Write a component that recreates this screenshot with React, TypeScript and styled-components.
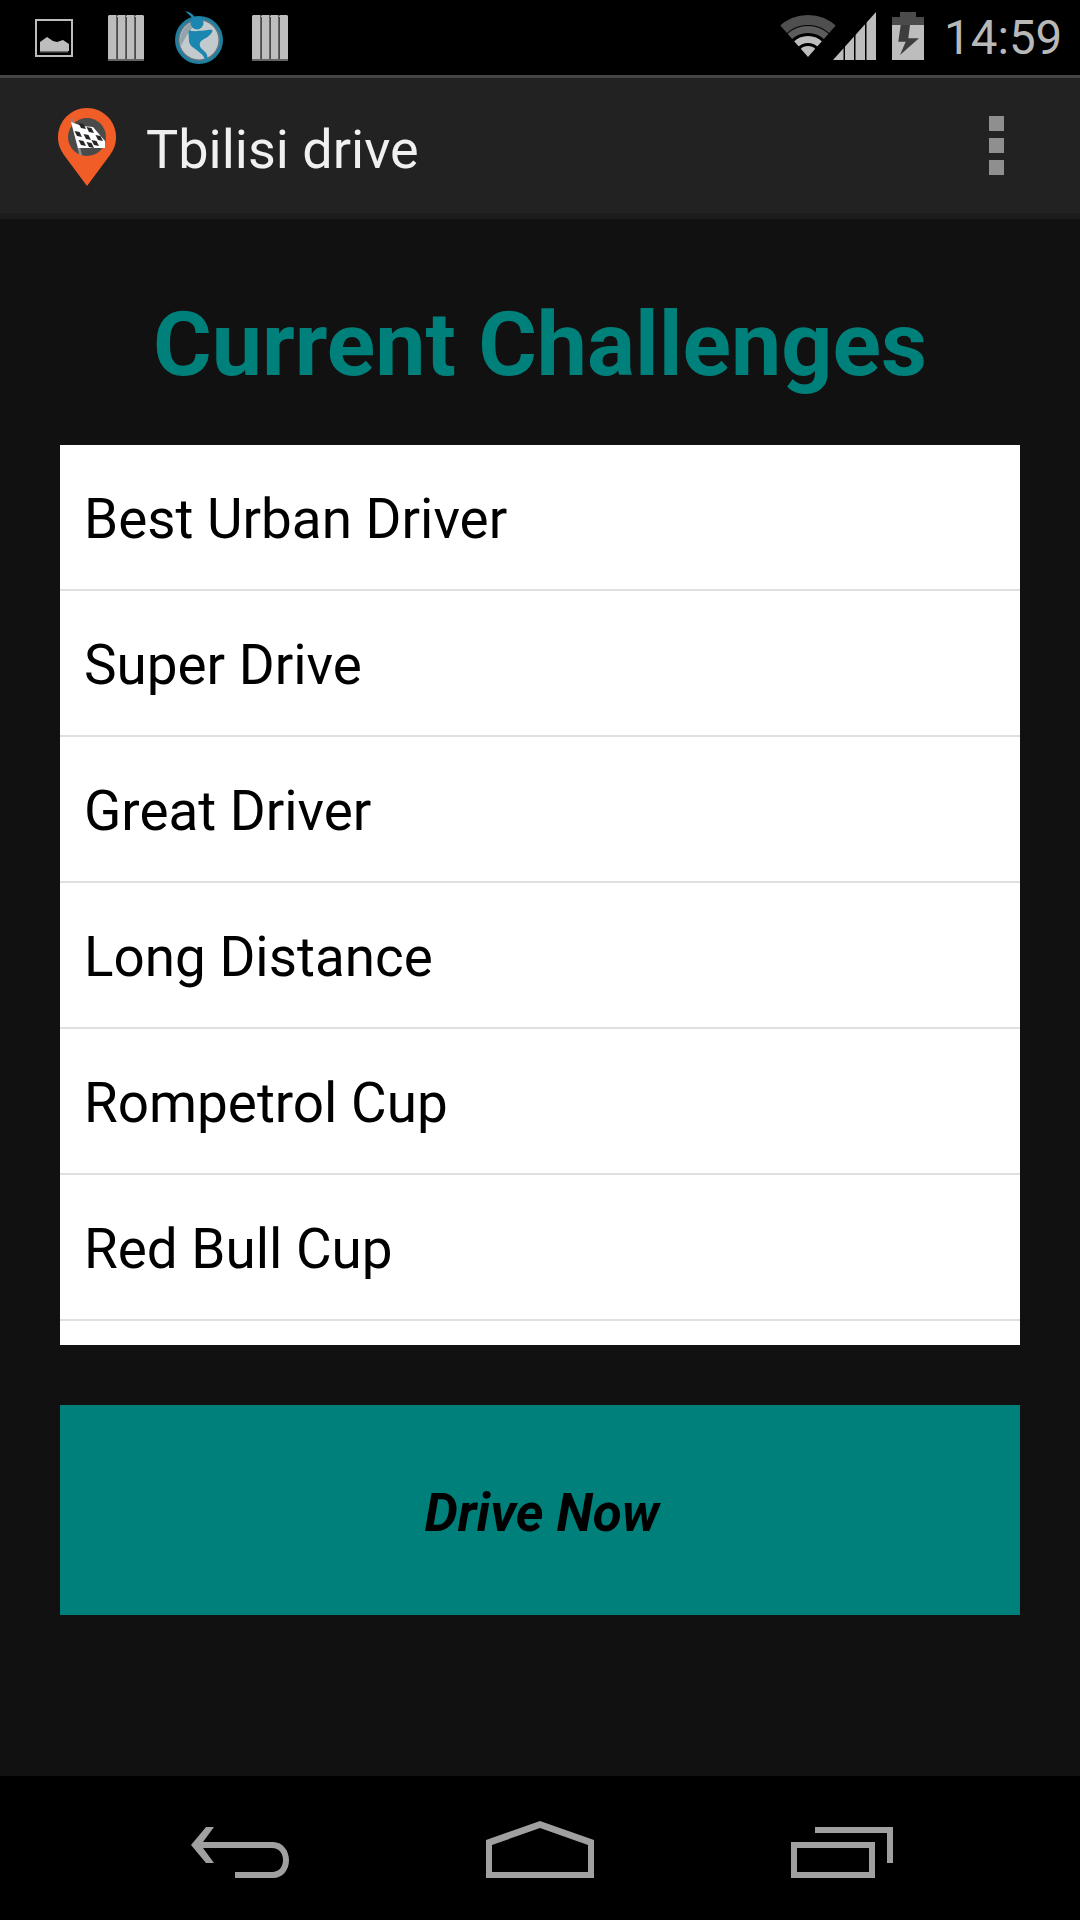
import React, { FunctionComponent } from 'react';
import styled, { createGlobalStyle } from 'styled-components';

const GlobalStyle = createGlobalStyle`
  html, body {
    margin: 0;
    padding: 0;
    background: #111111;
  }
  * {
    box-sizing: border-box;
  }
`;

/**
 *
 *  STYLE
 */
const Screen = styled.div`
  display: flex;
  flex-direction: column;
  width: 1080px;
  height: 1920px;
  overflow: hidden;
  background: #111111;
  font-family: Roboto, 'Liberation Sans', sans-serif;
`;

const StatusBar = styled.div`
  display: flex;
  align-items: flex-start;
  height: 75px;
  background: #000000;
`;

const StatusIcon = styled.span<{ $left: number; $top: number }>`
  display: block;
  flex: none;
  height: 0;
  margin-left: ${(p) => p.$left}px;
  padding-top: ${(p) => p.$top}px;

  svg {
    display: block;
  }
`;

const Clock = styled.span`
  margin-left: 20px;
  font-size: 47.5px;
  font-weight: 400;
  line-height: 77px;
  color: #b8b8b8;
`;

const ActionBar = styled.header`
  display: flex;
  align-items: center;
  height: 138px;
  padding: 0 76px 0 58px;
  border-top: 3px solid #444444;
  background: #222222;

  svg {
    margin-top: 3px;
  }
`;

const AppTitle = styled.h1`
  flex: 1;
  margin: 8px 0 0 30px;
  font-size: 54px;
  font-weight: 400;
  color: #f0f0f0;
`;

const OverflowMenu = styled.div`
  display: flex;
  flex-direction: column;
  gap: 7px;
`;

const MenuDot = styled.span`
  width: 15px;
  height: 15px;
  background: #8f8f8f;
`;

const Content = styled.main`
  flex: 1;
  display: flex;
  flex-direction: column;
  padding: 0 60px;
  border-top: 6px solid #1c1c1c;
`;

const Heading = styled.h2`
  height: 226px;
  margin: 0;
  padding-top: 66px;
  font-size: 89.7px;
  line-height: 120px;
  font-weight: 700;
  text-align: center;
  white-space: nowrap;
  color: #00807a;
`;

const ChallengeList = styled.ul`
  height: 900px;
  margin: 0;
  padding: 0;
  overflow: hidden;
  list-style: none;
  background: #ffffff;
`;

const ChallengeRow = styled.li`
  display: flex;
  align-items: center;
  height: 146px;
  padding: 4px 0 0 24px;
  border-bottom: 2px solid #e0e0e0;
  font-size: 54.8px;
  color: #000000;
`;

const DriveButton = styled.button`
  height: 210px;
  margin-top: 60px;
  padding: 4px 0 0 4px;
  border: none;
  background: #00807a;
  font-family: Roboto, 'Liberation Sans', sans-serif;
  font-size: 54px;
  font-weight: 700;
  font-style: italic;
  color: #000000;
`;

const DriveLabel = styled.span`
  display: inline-block;
  transform: scaleX(0.98);
`;

const NavBar = styled.nav`
  display: flex;
  align-items: flex-end;
  gap: 197px;
  height: 144px;
  padding: 0 0 42px 191px;
  background: #000000;

  svg {
    display: block;
    flex: none;
  }
`;

/**
 *
 *  ICONS
 */
const PictureIcon = () => (
  <svg width="38" height="38" viewBox="0 0 38 38">
    <rect x="1" y="1" width="36" height="36" fill="none" stroke="#bdbdbd" strokeWidth="2" />
    <path d="M5 32V23l7-5 6 4 4 1 6-2 6 4v7z" fill="#bdbdbd" />
    <path d="M5 32h28v1.500H5z" fill="#6e6e6e" />
  </svg>
);

const BarsIcon = () => (
  <svg width="36" height="46" viewBox="0 0 36 46">
    <path d="M1 0h7l1 1v43H0V1zM10 0h7l1 1v43H9V1zM19 0h7l1 1v43h-9V1zM28 0h7l1 1v43h-9V1z" fill="#bdbdbd" />
    <path d="M0 44h36v2H0zM8 1h1v45H8zM17 1h1v45h-1zM26 1h1v45h-1z" fill="#646464" />
    <path d="M9 2h.700v42H9zM18 2h.700v42H18zM27 2h.700v42H27z" fill="#1a1a1a" />
  </svg>
);

const SwirlIcon = () => (
  <svg width="50" height="54" viewBox="0 0 50 54">
    <circle cx="25" cy="29" r="24" fill="#1f7f9f" />
    <circle cx="25" cy="29" r="21" fill="#5f7480" />
    <circle cx="25" cy="29" r="19.500" fill="#c2cacd" />
    <path d="M25 10a19 19 0 0 0-18 25c4-8 8-16 18-25z" fill="#93a5ab" />
    <path d="M11 0c5 1 8 3 10 7l-2 1c-2-3-5-5-8-8z" fill="#2088b0" />
    <circle cx="23" cy="12" r="6.500" fill="#1b86b0" />
    <path d="M15 19c5 3 21-1 23 0 2 1-3 7-8 9-6 3-5 8-1 11 4 3 6 7 3 12l-2 1c2-5-1-8-5-11-6-5-10-6-10-12 0-3-1-7 0-10z" fill="#1b86b0" />
  </svg>
);

const WifiIcon = () => (
  <svg width="59" height="44" viewBox="0 0 59 44">
    <clipPath id="wifi-wedge">
      <path d="M29 43L-15-7H73z" />
    </clipPath>
    <g clipPath="url(#wifi-wedge)" fill="none">
      <circle cx="29" cy="43" r="37" stroke="#4f4f4f" strokeWidth="10" />
      <circle cx="29" cy="43" r="27.500" stroke="#5c5c5c" strokeWidth="7" />
      <circle cx="29" cy="43" r="17.500" stroke="#bdbdbd" strokeWidth="7" />
      <circle cx="29" cy="43" r="5.500" stroke="#bdbdbd" strokeWidth="11" />
    </g>
  </svg>
);

const SignalIcon = () => (
  <svg width="43" height="48" viewBox="0 0 43 48">
    <path d="M43 0v48H0z" fill="#bdbdbd" />
    <path d="M10.500 34v14h1.500V34zM21 22v26h1.500V22zM32 10v38h1.500V10z" fill="#000000" />
  </svg>
);

const BatteryIcon = () => (
  <svg width="32" height="48" viewBox="0 0 32 48">
    <path d="M8 0h16v5h8v43H0V5h8z" fill="#bdbdbd" />
    <path d="M8 0h16v5h8v8H0V5h8z" fill="#4b4b4b" />
    <path d="M8.700 13H18l-1.700 13.300H27L8 43l5.700-13.300H6.300z" fill="#3d3d3d" />
  </svg>
);

const checks = [
  [24, 18], [32, 22], [41, 30],
  [20, 26], [29, 29], [37, 35],
  [24, 35], [32, 37],
];

const PinLogo = () => (
  <svg width="58" height="78" viewBox="0 0 58 78">
    <path d="M29 0c16 0 29 13 29 29 0 7-2 12-6 18L29 78 6 47C2 41 0 36 0 29 0 13 13 0 29 0z" fill="#f15d27" />
    <circle cx="29" cy="29" r="19" fill="#4a4a4a" />
    <path d="M12.500 11l2-.5L24 47l-2.500.5z" fill="#8c8c8c" />
    <path d="M13 14l11 4 11 1 12 14v7H20z" fill="#ffffff" />
    {checks.map(([x, y]) => (
      <path key={`${x}-${y}`} d={`M${x - 3.5} ${y - 3}l5 1 2.500 5-5-1z`} fill="#262626" />
    ))}
  </svg>
);

const BackIcon = () => (
  <svg width="98" height="51" viewBox="0 0 98 51">
    <path
      d="M15 0h8L12 15h70c10 0 16 9 16 18 0 10-6 18-16 18H44v-6h37c7 0 11-5 11-12s-4-12-11-12H12l11 15h-8L0 18z"
      fill="#a0a0a0"
    />
  </svg>
);

const HomeIcon = () => (
  <svg width="108" height="57" viewBox="0 0 108 57">
    <path
      d="M0 19L54 0l54 19v38H0zM6 24v27h96V24L54 7z"
      fill="#a0a0a0"
      fillRule="evenodd"
    />
  </svg>
);

const RecentIcon = () => (
  <svg width="102" height="51" viewBox="0 0 102 51" fill="none" stroke="#a0a0a0" strokeWidth="6">
    <path d="M24 3h75v33" />
    <rect x="3" y="18" width="78" height="30" />
  </svg>
);

/**
 *
 *  FUNCTIONAL COMPONENT
 */
const challenges = [
  'Best Urban Driver',
  'Super Drive',
  'Great Driver',
  'Long Distance',
  'Rompetrol Cup',
  'Red Bull Cup',
  '',
];

const App: FunctionComponent = () => (
  <>
    <GlobalStyle />
    <Screen>
      <StatusBar>
        <StatusIcon $left={35} $top={19}>
          <PictureIcon />
        </StatusIcon>
        <StatusIcon $left={35} $top={15}>
          <BarsIcon />
        </StatusIcon>
        <StatusIcon $left={30} $top={11}>
          <SwirlIcon />
        </StatusIcon>
        <StatusIcon $left={28} $top={15}>
          <BarsIcon />
        </StatusIcon>
        <StatusIcon $left={491} $top={14}>
          <WifiIcon />
        </StatusIcon>
        <StatusIcon $left={-5} $top={12}>
          <SignalIcon />
        </StatusIcon>
        <StatusIcon $left={16} $top={12}>
          <BatteryIcon />
        </StatusIcon>
        <Clock>14:59</Clock>
      </StatusBar>
      <ActionBar>
        <PinLogo />
        <AppTitle>Tbilisi drive</AppTitle>
        <OverflowMenu>
          <MenuDot />
          <MenuDot />
          <MenuDot />
        </OverflowMenu>
      </ActionBar>
      <Content>
        <Heading>Current Challenges</Heading>
        <ChallengeList>
          {challenges.map((name) => (
            <ChallengeRow key={name}>{name}</ChallengeRow>
          ))}
        </ChallengeList>
        <DriveButton>
          <DriveLabel>Drive Now</DriveLabel>
        </DriveButton>
      </Content>
      <NavBar>
        <BackIcon />
        <HomeIcon />
        <RecentIcon />
      </NavBar>
    </Screen>
  </>
);

export default App;
